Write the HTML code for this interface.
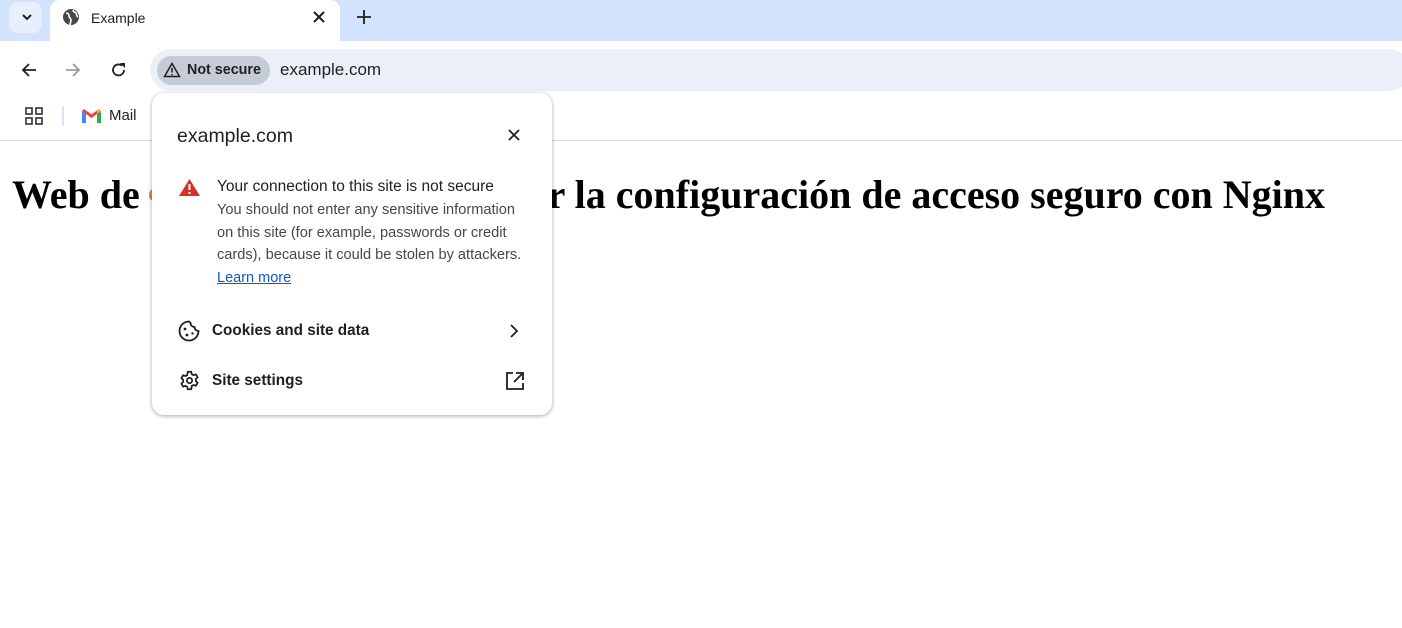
<!DOCTYPE html>
<html><head><meta charset="utf-8"><style>
*{margin:0;padding:0;box-sizing:border-box}
body{width:1402px;height:628px;overflow:hidden;background:#fff;font-family:"Liberation Sans",Arial,sans-serif;position:relative}
.abs{position:absolute}
.h{font-family:'Liberation Serif',serif;font-weight:bold;font-size:40px;color:#000;white-space:nowrap}
</style></head><body>
<div class="abs" style="left:0;top:0;width:1402px;height:41px;background:#d3e3fd"></div>
<div class="abs" style="left:9px;top:2px;width:33px;height:31px;background:#e8effc;border-radius:9px"></div>
<svg class="abs" style="left:20px;top:11px" width="14" height="12"><path d="M3 4l4 4 4-4" stroke="#1f1f1f" stroke-width="2" fill="none"/></svg>
<div class="abs" style="left:50px;top:0;width:290px;height:44px;background:#fff;border-radius:10px 10px 0 0"></div>
<svg class="abs" style="left:62px;top:8px" width="18" height="18" viewBox="0 0 18 18"><circle cx="9" cy="9" r="8" fill="#474747"/><path d="M4 5c2 0 3 1 3 3s2 2 2 4-1 3-1 5M11 2c0 2 2 2 3 3s0 3 2 4" stroke="#fff" stroke-width="1.6" fill="none"/></svg>
<div class="abs" style="left:91px;top:10px;font-size:14px;color:#1f1f1f">Example</div>
<svg class="abs" style="left:313px;top:11px" width="12" height="12"><path d="M1 1l10 10M11 1L1 11" stroke="#1f1f1f" stroke-width="2"/></svg>
<svg class="abs" style="left:357px;top:10px" width="14" height="14"><path d="M7 0v14M0 7h14" stroke="#1f1f1f" stroke-width="1.8"/></svg>
<div class="abs" style="left:0;top:41px;width:1402px;height:100px;background:#fff;border-bottom:1px solid #ddd"></div>
<svg class="abs" style="left:21px;top:62px" width="16" height="16"><path d="M15 8H2M8 2L2 8l6 6" stroke="#1f1f1f" stroke-width="1.8" fill="none"/></svg>
<svg class="abs" style="left:65px;top:62px" width="16" height="16"><path d="M1 8h13M8 2l6 6-6 6" stroke="#999" stroke-width="1.8" fill="none"/></svg>
<svg class="abs" style="left:110px;top:61px" width="18" height="18" viewBox="0 0 18 18"><path d="M14 9a5.5 5.5 0 1 1-2-4.3" stroke="#1f1f1f" stroke-width="1.8" fill="none"/><path d="M10 2h5v5z" fill="#1f1f1f"/></svg>
<div class="abs" style="left:150px;top:49px;width:1260px;height:42px;background:#eaeff8;border-radius:21px"></div>
<div class="abs" style="left:157px;top:56px;width:113px;height:29px;background:#c5ccd7;border-radius:15px"></div>
<svg class="abs" style="left:163px;top:62px" width="18" height="16" viewBox="0 0 18 16"><path d="M9 1.5L1.5 14.5h15z" stroke="#1f1f1f" stroke-width="1.5" fill="none"/><path d="M9 6v4.5M9 12v1.3" stroke="#1f1f1f" stroke-width="1.5"/></svg>
<div class="abs" style="left:187px;top:62px;font-size:14.3px;font-weight:bold;color:#1f1f1f">Not secure</div>
<div class="abs" style="left:280px;top:60px;font-size:17px;color:#1f1f1f">example.com</div>
<svg class="abs" style="left:25px;top:107px" width="19" height="19"><g fill="none" stroke="#474747" stroke-width="1.8"><rect x="1" y="1" width="6" height="6"/><rect x="11" y="1" width="6" height="6"/><rect x="1" y="11" width="6" height="6"/><rect x="11" y="11" width="6" height="6"/></g></svg>
<div class="abs" style="left:62px;top:106px;width:2px;height:20px;background:#d3e3fd"></div>
<svg class="abs" style="left:82px;top:109px" width="19" height="14" viewBox="0 0 19 14"><path d="M0 2v12h4V5z" fill="#4285f4"/><path d="M15 5v9h4V2z" fill="#34a853"/><path d="M0 2l9.5 7L19 2 17 0 9.5 5.5 2 0z" fill="#ea4335"/><path d="M15 5v-3l2-2 2 2z" fill="#fbbc04"/></svg>
<div class="abs" style="left:109px;top:107px;font-size:15px;color:#1f1f1f">Mail</div>
<div class="abs h" style="left:12px;top:171px">Web de</div>
<div class="abs" style="left:149px;top:189px;width:5px;height:12px;background:#d9932a;border-radius:5px 0 0 5px"></div>
<div class="abs h" style="right:77px;top:171px">verificar la configuración de acceso seguro con Nginx</div>
<div class="abs" style="left:152px;top:93px;width:400px;height:322px;background:#fff;border-radius:12px;box-shadow:0 1px 4px rgba(0,0,0,.35)"></div>
<div class="abs" style="left:177px;top:125px;font-size:19.5px;color:#1f1f1f">example.com</div>
<svg class="abs" style="left:508px;top:129px" width="12" height="12"><path d="M1 1l10 10M11 1L1 11" stroke="#1f1f1f" stroke-width="1.8"/></svg>
<svg class="abs" style="left:179px;top:179px" width="21" height="17" viewBox="0 0 21 17"><path d="M10.5 0L21 17H0z" fill="#d93025"/><path d="M10.5 5v6M10.5 13v2" stroke="#fff" stroke-width="2"/></svg>
<div class="abs" style="left:217px;top:178px;font-size:15.5px;color:#1f1f1f;white-space:nowrap">Your connection to this site is not secure</div>
<div class="abs" style="left:217px;top:199px;font-size:14.6px;line-height:22.5px;color:#474747;width:310px">You should not enter any sensitive information<br>on this site (for example, passwords or credit<br>cards), because it could be stolen by attackers.</div>
<div class="abs" style="left:217px;top:270px;font-size:14.5px;color:#0b57d0;text-decoration:underline">Learn more</div>
<svg class="abs" style="left:178px;top:320px" width="22" height="22" viewBox="0 0 22 22"><path d="M11 1.5a9.5 9.5 0 1 0 9.5 9.5 4 4 0 0 1-4-4 4 4 0 0 1-4-4z" fill="none" stroke="#1f1f1f" stroke-width="1.8"/><circle cx="7" cy="9" r="1.4" fill="#1f1f1f"/><circle cx="9" cy="15" r="1.4" fill="#1f1f1f"/><circle cx="14.5" cy="13.5" r="1.2" fill="#1f1f1f"/></svg>
<div class="abs" style="left:212px;top:322px;font-size:15.3px;font-weight:bold;color:#1f1f1f">Cookies and site data</div>
<svg class="abs" style="left:509px;top:324px" width="10" height="14"><path d="M2 1l6 6-6 6" stroke="#1f1f1f" stroke-width="1.8" fill="none"/></svg>
<svg class="abs" style="left:179px;top:370px" width="21" height="21" viewBox="0 0 24 24"><path d="M10 2h4l.6 2.8 2 1.1 2.7-.9 2 3.4-2.1 1.9v2.4l2.1 1.9-2 3.4-2.7-.9-2 1.1L14 22h-4l-.6-2.8-2-1.1-2.7.9-2-3.4 2.1-1.9v-2.4L2.7 9.4l2-3.4 2.7.9 2-1.1z" fill="none" stroke="#1f1f1f" stroke-width="2" stroke-linejoin="round"/><circle cx="12" cy="12" r="3" fill="none" stroke="#1f1f1f" stroke-width="2"/></svg>
<div class="abs" style="left:212px;top:372px;font-size:15.3px;font-weight:bold;color:#1f1f1f">Site settings</div>
<svg class="abs" style="left:506px;top:372px" width="18" height="18" viewBox="0 0 18 18"><path d="M7 1H1v16h16v-6M10 1h7v7M17 1L8 10" stroke="#1f1f1f" stroke-width="1.8" fill="none"/></svg>
</body></html>
